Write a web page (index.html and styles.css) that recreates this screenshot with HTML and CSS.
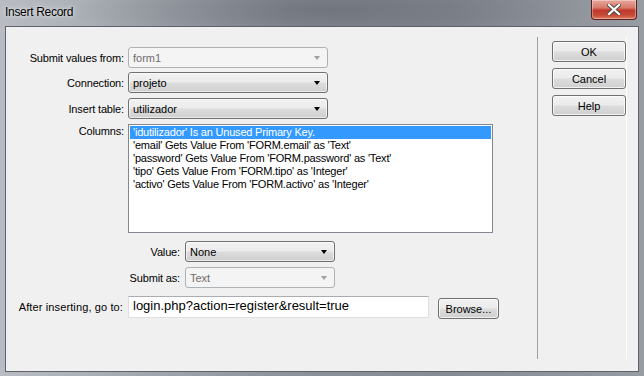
FILE: index.html
```html
<!DOCTYPE html>
<html>
<head>
<meta charset="utf-8">
<link rel="stylesheet" href="styles.css">
</head>
<body>
<div class="window">
  <div class="titlebar">
    <div class="title">Insert Record</div>
    <div class="close"><svg width="14" height="11" viewBox="0 0 14 11"><path d="M2 1 L12 10 M12 1 L2 10" stroke="#4a4a4a" stroke-width="4" stroke-linecap="square"/><path d="M2 1 L12 10 M12 1 L2 10" stroke="#ffffff" stroke-width="2.2" stroke-linecap="square"/></svg></div>
  </div>
  <div class="client">
    <div class="form">
      <div class="row r1">
        <div class="label">Submit values from:</div>
        <div class="select disabled w200"><span>form1</span><i class="arrow"></i></div>
      </div>
      <div class="row r2">
        <div class="label">Connection:</div>
        <div class="select w200"><span>projeto</span><i class="arrow"></i></div>
      </div>
      <div class="row r3">
        <div class="label">Insert table:</div>
        <div class="select w200"><span>utilizador</span><i class="arrow"></i></div>
      </div>
      <div class="row r4">
        <div class="label top">Columns:</div>
        <div class="listbox">
          <div class="item sel">'idutilizador' Is an Unused Primary Key.</div>
          <div class="item">'email' Gets Value From 'FORM.email' as 'Text'</div>
          <div class="item">'password' Gets Value From 'FORM.password' as 'Text'</div>
          <div class="item">'tipo' Gets Value From 'FORM.tipo' as 'Integer'</div>
          <div class="item">'activo' Gets Value From 'FORM.activo' as 'Integer'</div>
        </div>
      </div>
      <div class="row r5">
        <div class="label short">Value:</div>
        <div class="select w150"><span>None</span><i class="arrow"></i></div>
      </div>
      <div class="row r6">
        <div class="label short">Submit as:</div>
        <div class="select disabled w150"><span>Text</span><i class="arrow"></i></div>
      </div>
      <div class="row r7">
        <div class="label wide">After inserting, go to:</div>
        <div class="textinput">login.php?action=register&amp;result=true</div>
        <div class="button browse">Browse...</div>
      </div>
    </div>
    <div class="side">
      <div class="button side-btn">OK</div>
      <div class="button side-btn">Cancel</div>
      <div class="button side-btn">Help</div>
    </div>
  </div>
</div>
</body>
</html>
```

FILE: styles.css
```css
* { box-sizing: border-box; }
html, body { margin: 0; padding: 0; }
body {
  width: 644px;
  height: 376px;
  overflow: hidden;
  font-family: "Liberation Sans", Arial, sans-serif;
  font-size: 11px;
  color: #000;
}
.window {
  width: 644px;
  height: 376px;
  background:
    radial-gradient(ellipse 260px 40px at 330px 10px, rgba(90,95,104,0.55), rgba(90,95,104,0) 100%),
    linear-gradient(90deg, #b9bdc3 0%, #a4a9b0 20%, #8d929a 45%, #868b93 70%, #979ca3 100%);
  display: flex;
  flex-direction: column;
}
.titlebar {
  height: 26px;
  display: flex;
  justify-content: space-between;
  align-items: flex-start;
  padding-left: 5px;
  padding-right: 7px;
}
.title {
  font-family: "Liberation Sans", Arial, sans-serif;
  font-size: 12px;
  letter-spacing: -0.3px;
  color: #000;
  margin-top: 5px;
  text-shadow: 0 0 6px rgba(255,255,255,0.7), 0 0 3px rgba(255,255,255,0.6);
}
.close {
  width: 46px;
  height: 20px;
  border: 1px solid #5a2020;
  border-top: none;
  border-radius: 0 0 4px 4px;
  background: linear-gradient(180deg, #e8a89c 0%, #d87a69 40%, #c0392b 55%, #c74a36 80%, #e07a5c 100%);
  box-shadow: inset 0 0 0 1px rgba(255,255,255,0.35);
  display: flex;
  align-items: center;
  justify-content: center;
}
.client {
  margin-left: 5px;
  width: 634px;
  height: 346px;
  background: #f0f0f0;
  border: 1px solid #5f6369;
  display: flex;
}
.form {
  width: 530px;
  padding-top: 20px;
}
.row {
  display: flex;
  align-items: center;
}
.r2 { margin-top: 4px; }
.r3 { margin-top: 5px; }
.r4 { margin-top: 5px; align-items: flex-start; }
.r5 { margin-top: 8px; }
.r6 { margin-top: 5px; }
.r7 { margin-top: 6px; }
.label {
  width: 118px;
  text-align: right;
  margin-right: 4px;
  white-space: nowrap;
  color: #000;
  letter-spacing: -0.15px;
}
.label.top { margin-top: 1px; }
.label.short { width: 174px; margin-right: 5px; }
.label.wide { letter-spacing: 0.12px; margin-right: 5px; width: 117px; }
.select {
  height: 21px;
  border: 1px solid #707070;
  border-radius: 3px;
  background: linear-gradient(180deg, #f2f2f2 0%, #ebebeb 48%, #dddddd 52%, #cfcfcf 100%);
  display: flex;
  align-items: center;
  justify-content: space-between;
  padding-left: 4px;
  padding-right: 7px;
  box-shadow: inset 0 0 0 1px rgba(255,255,255,0.6);
}
.w200 { width: 200px; }
.w150 { width: 150px; }
.select span { line-height: 14px; }
.arrow {
  width: 0; height: 0;
  border-left: 3.5px solid transparent;
  border-right: 3.5px solid transparent;
  border-top: 4px solid #000;
}
.select.disabled {
  background: #f4f4f4;
  border-color: #adb2b5;
  box-shadow: none;
  color: #6d6d6d;
}
.select.disabled .arrow { border-top-color: #a0a0a0; }
.listbox {
  width: 365px;
  height: 109px;
  background: #fff;
  border: 1px solid #828790;
  padding: 1px;
}
.item {
  height: 13px;
  line-height: 13px;
  padding-left: 3px;
  white-space: nowrap;
  font-size: 11px;
  letter-spacing: -0.2px;
}
.item.sel {
  background: #3399ff;
  color: #fff;
}
.textinput {
  width: 301px;
  height: 22px;
  background: #fff;
  border: 1px solid #dcdfe3;
  border-top-color: #abadb3;
  font-size: 13px;
  line-height: 18px;
  padding-left: 4px;
  white-space: nowrap;
  overflow: hidden;
}
.button {
  height: 21px;
  border: 1px solid #707070;
  border-radius: 3px;
  background: linear-gradient(180deg, #f2f2f2 0%, #ebebeb 48%, #dddddd 52%, #cfcfcf 100%);
  box-shadow: inset 0 0 0 1px rgba(255,255,255,0.7);
  display: flex;
  align-items: center;
  justify-content: center;
  color: #000;
}
.browse {
  width: 61px;
  margin-left: 9px;
  margin-top: 4px;
}
.side {
  margin-top: 10px;
  height: 322px;
  border-left: 1px solid #a0a0a0;
  box-shadow: 1px 0 0 #ffffff;
  margin-left: 1px;
  padding-left: 14px;
  padding-top: 4px;
  display: flex;
  flex-direction: column;
  gap: 6px;
}
.side-btn { width: 74px; }
```
